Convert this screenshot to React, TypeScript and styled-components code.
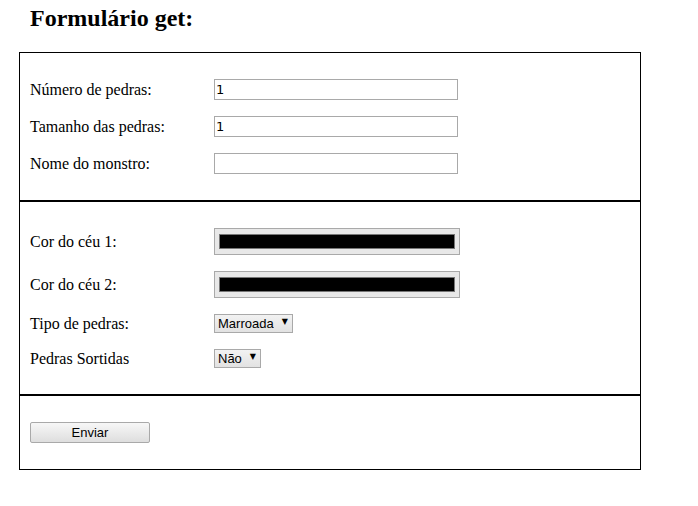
import React from 'react';
import styled, { createGlobalStyle } from 'styled-components';

const GlobalStyle = createGlobalStyle`
    html, body {
        margin: 0;
        padding: 0;
        background: #fff;
    }
    body {
        font-family: "Liberation Serif", "Times New Roman", serif;
        color: #000;
    }
`;

const Page = styled.div`
    width: 698px;
    padding-top: 5px;
`;

const Title = styled.h2`
    margin: 0 0 20px 30px;
    font-size: 24px;
    font-weight: bold;
    line-height: 27px;
`;

const FormBox = styled.form`
    width: 620px;
    margin-left: 19px;
    border: 1px solid #000;
`;

const Section = styled.div<{ divider?: boolean }>`
    display: flex;
    flex-direction: column;
    gap: 16px;
    padding: 26px 10px;
    border-top: ${(props) => (props.divider ? '2px solid #000' : 'none')};
`;

const Row = styled.div`
    display: grid;
    grid-template-columns: 184px auto;
    align-items: center;
    justify-items: start;
`;

const Label = styled.label`
    font-size: 16px;
`;

const TextInput = styled.input`
    box-sizing: border-box;
    width: 244px;
    height: 21px;
    margin: 0;
    padding: 0 1px;
    border: 1px solid #a9a9a9;
    font-family: "DejaVu Sans", sans-serif;
    font-size: 13px;
    color: #000;
    outline: none;
`;

const ColorInput = styled.input`
    box-sizing: border-box;
    width: 246px;
    height: 27px;
    margin: 0;
    padding: 0;
    border: 1px solid #a9a9a9;
    background: #e8e8e8;
    -webkit-appearance: none;
    appearance: none;

    &::-webkit-color-swatch-wrapper {
        padding: 5px 4px;
    }
    &::-webkit-color-swatch {
        border: 1px solid #777;
    }
`;

const SelectWrap = styled.span`
    position: relative;
    display: inline-block;

    &::after {
        content: '▼';
        position: absolute;
        right: 5px;
        top: 3px;
        font-family: "DejaVu Sans", sans-serif;
        font-size: 8px;
        pointer-events: none;
    }
`;

const Select = styled.select`
    box-sizing: border-box;
    height: 19px;
    margin: 0;
    padding: 0 18px 0 3px;
    border: 1px solid #a9a9a9;
    border-radius: 0;
    background: linear-gradient(#f2f2f2, #e2e2e2);
    font-family: "Liberation Sans", Arial, sans-serif;
    font-size: 13px;
    color: #000;
    -webkit-appearance: none;
    appearance: none;
`;

const SubmitButton = styled.button`
    box-sizing: border-box;
    width: 120px;
    height: 21px;
    margin: 0;
    padding: 0;
    border: 1px solid #a9a9a9;
    border-radius: 2px;
    background: linear-gradient(#f7f7f7, #dedede);
    font-family: "Liberation Sans", Arial, sans-serif;
    font-size: 13px;
    color: #000;
`;

const App: React.FC = () => {
    return (
        <Page>
            <GlobalStyle />
            <Title>Formulário get:</Title>

            <FormBox onSubmit={(e) => e.preventDefault()}>
                <Section>
                    <Row>
                        <Label htmlFor="pedras">Número de pedras:</Label>
                        <TextInput id="pedras" type="text" defaultValue="1" />
                    </Row>
                    <Row>
                        <Label htmlFor="tamanho">Tamanho das pedras:</Label>
                        <TextInput id="tamanho" type="text" defaultValue="1" />
                    </Row>
                    <Row>
                        <Label htmlFor="monstro">Nome do monstro:</Label>
                        <TextInput id="monstro" type="text" />
                    </Row>
                </Section>

                <Section divider>
                    <Row>
                        <Label htmlFor="ceu1">Cor do céu 1:</Label>
                        <ColorInput id="ceu1" type="color" defaultValue="#000000" />
                    </Row>
                    <Row>
                        <Label htmlFor="ceu2">Cor do céu 2:</Label>
                        <ColorInput id="ceu2" type="color" defaultValue="#000000" />
                    </Row>
                    <Row>
                        <Label htmlFor="tipo">Tipo de pedras:</Label>
                        <SelectWrap>
                            <Select id="tipo" defaultValue="marroada">
                                <option value="marroada">Marroada</option>
                            </Select>
                        </SelectWrap>
                    </Row>
                    <Row>
                        <Label htmlFor="sortidas">Pedras Sortidas</Label>
                        <SelectWrap>
                            <Select id="sortidas" defaultValue="nao">
                                <option value="nao">Não</option>
                                <option value="sim">Sim</option>
                            </Select>
                        </SelectWrap>
                    </Row>
                </Section>

                <Section divider>
                    <Row>
                        <SubmitButton type="submit">Enviar</SubmitButton>
                    </Row>
                </Section>
            </FormBox>
        </Page>
    );
};

export default App;
